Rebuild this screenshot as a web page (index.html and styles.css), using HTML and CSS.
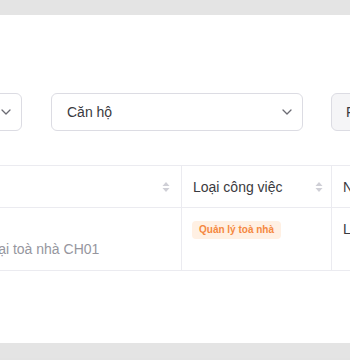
FILE: index.html
```html
<!DOCTYPE html>
<html lang="vi">
<head>
<meta charset="utf-8">
<link rel="stylesheet" href="styles.css">
</head>
<body>
<div class="band"></div>
<main class="card">
  <div class="content">
    <div class="filters">
      <div class="select select-a">
        <span class="sel-text">Toà nhà CH01</span>
        <svg class="chev" width="10" height="6" viewBox="0 0 10 6"><path d="M1 1l4 4 4-4" fill="none" stroke="#6b6b73" stroke-width="1.3" stroke-linecap="round" stroke-linejoin="round"/></svg>
      </div>
      <div class="select select-b">
        <span class="sel-text">Căn hộ</span>
        <svg class="chev" width="10" height="6" viewBox="0 0 10 6"><path d="M1 1l4 4 4-4" fill="none" stroke="#6b6b73" stroke-width="1.3" stroke-linecap="round" stroke-linejoin="round"/></svg>
      </div>
      <button class="btn">Filter</button>
    </div>
    <div class="table">
      <div class="row head">
        <div class="cell c1"><span>Tên công việc</span>
          <svg class="sort" width="8" height="12" viewBox="0 0 8 12"><path d="M4 1L7.5 5H0.5Z M4 11L7.5 7H0.5Z" fill="#cfcfd6"/></svg></div>
        <div class="cell c2"><span>Loại công việc</span>
          <svg class="sort" width="8" height="12" viewBox="0 0 8 12"><path d="M4 1L7.5 5H0.5Z M4 11L7.5 7H0.5Z" fill="#cfcfd6"/></svg></div>
        <div class="cell c3"><span>Người phụ trách</span></div>
      </div>
      <div class="row body">
        <div class="cell c1 desc">
          <div class="line1">Bảo trì</div>
          <div class="line2">Kiểm tra định kỳ tại toà nhà CH01</div>
        </div>
        <div class="cell c2"><span class="tag">Quản lý toà nhà</span></div>
        <div class="cell c3 person">Lê Văn An</div>
      </div>
    </div>
  </div>
</main>
<div class="band"></div>
</body>
</html>
```

FILE: styles.css
```css
html, body {
  margin: 0;
  padding: 0;
}
body {
  width: 350px;
  height: 360px;
  overflow: hidden;
  background: #e3e3e3;
  font-family: "Liberation Sans", Arial, "Noto Sans", sans-serif;
  font-size: 14px;
  color: #3a3a40;
}
.band {
  height: 15px;
  background: #e4e4e4;
}
.card {
  height: 328px;
  background: #ffffff;
  overflow: hidden;
}
.content {
  margin-left: -200px;
  width: 800px;
  padding-top: 78px;
}
.filters {
  display: flex;
  align-items: center;
}
.select {
  box-sizing: border-box;
  height: 38px;
  border: 1px solid #dcdce3;
  border-radius: 6px;
  display: flex;
  align-items: center;
  justify-content: space-between;
  padding: 0 10px 0 15px;
  background: #fff;
}
.select-a {
  width: 222px;
}
.select-b {
  width: 252px;
  margin-left: 29px;
}
.sel-text {
  color: #3a3a40;
}
.chev {
  display: block;
}
.btn {
  box-sizing: border-box;
  height: 38px;
  margin-left: 28px;
  padding: 0 14px;
  border: 1px solid #dcdce3;
  border-radius: 6px;
  background: #f5f5f7;
  font: inherit;
  color: #3a3a40;
}
.table {
  margin-top: 34px;
  border-top: 1px solid #ebebf0;
}
.row {
  display: flex;
  border-bottom: 1px solid #ebebf0;
}
.row.head {
  height: 41px;
}
.row.body {
  height: 62px;
}
.cell {
  box-sizing: border-box;
  padding: 0 11px;
}
.c1 {
  width: 382px;
  border-right: 1px solid #ebebf0;
}
.c2 {
  width: 150px;
  border-right: 1px solid #ebebf0;
}
.c3 {
  flex: 1;
}
.head .cell {
  display: flex;
  align-items: center;
  justify-content: space-between;
  color: #3a3a40;
}
.head .c2 {
  padding-right: 8px;
}
.sort {
  display: block;
}
.body .cell {
  padding-top: 11px;
  line-height: 20px;
}
.desc {
  color: #96969e;
  padding-left: 90px;
}
.body .c2 {
  padding-top: 13px;
  padding-left: 10px;
}
.tag {
  display: inline-block;
  height: 18px;
  line-height: 18px;
  padding: 0 7px;
  border-radius: 4px;
  background: #fff0e3;
  color: #f5883f;
  font-size: 10px;
  font-weight: bold;
  vertical-align: top;
}
.person {
  color: #3a3a40;
}
```
